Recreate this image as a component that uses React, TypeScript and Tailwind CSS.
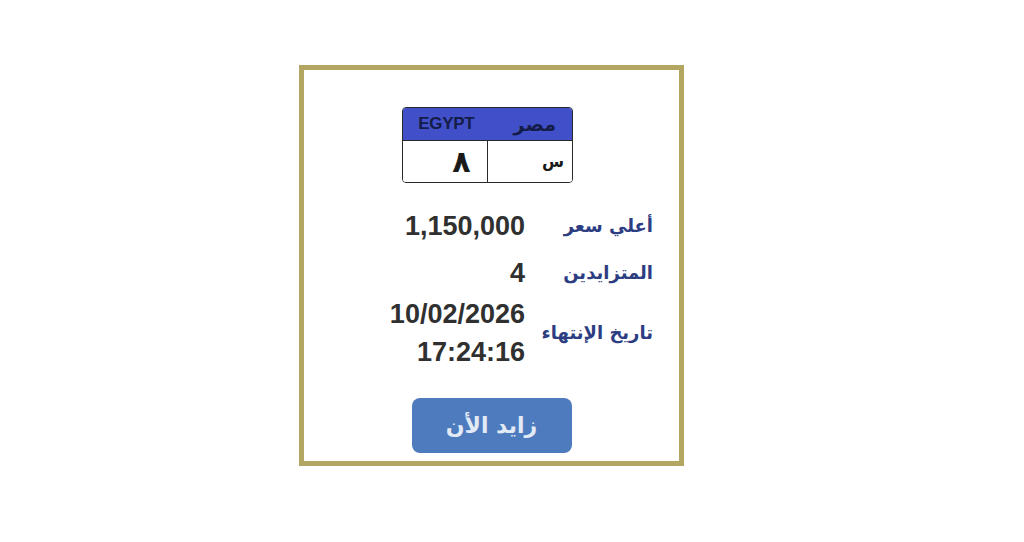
import React from "react";

const arabic = { fontFamily: '"DejaVu Sans", "Liberation Sans", sans-serif' };
const latin = { fontFamily: '"Liberation Sans", Arial, sans-serif' };

function Row({ label, values, className }: { label: string; values: string[]; className?: string }) {
  return (
    <div dir="rtl" className={"flex items-center " + (className ?? "")}>
      <div
        className="w-[128px] shrink-0 text-right text-[18px] font-bold text-[#2d3d82] leading-[38px]"
        style={arabic}
      >
        {label}
      </div>
      <div className="flex flex-col items-start">
        {values.map((v) => (
          <div
            key={v}
            dir="ltr"
            className="h-[38px] text-[27px] font-bold leading-[38px] text-[#303030]"
            style={latin}
          >
            {v}
          </div>
        ))}
      </div>
    </div>
  );
}

export default function App() {
  return (
    <div className="w-[1024px] h-[542px] bg-white overflow-hidden">
      <div className="ml-[299px] mt-[65px] w-[385px] h-[401px] border-[5px] border-[#b3a663] bg-white flex flex-col">
        {/* plate */}
        <div className="flex justify-center pt-[37px]">
          <div className="mr-[8px] w-[171px] h-[76px] rounded-[4px] border-[1.5px] border-[#2a2a2a] overflow-hidden flex flex-col">
            <div className="h-[33px] bg-[#4150c8] flex border-b-[1.5px] border-[#2a2a2a]">
              <div className="w-1/2 flex items-center justify-center pl-[2px]">
                <span className="text-[17px] font-bold text-[#141c48] tracking-[-0.3px]" style={latin}>
                  EGYPT
                </span>
              </div>
              <div className="w-1/2 flex items-center justify-center pl-[10px]">
                <span className="text-[19px] font-bold text-[#141c48]" style={arabic}>
                  مصر
                </span>
              </div>
            </div>
            <div className="flex-1 flex bg-white">
              <div className="w-1/2 border-r-[1.5px] border-[#2a2a2a] flex items-center justify-end pr-[16px]">
                <span className="text-[30px] font-bold text-[#1a1a1a] leading-none" style={arabic}>
                  ٨
                </span>
              </div>
              <div className="w-1/2 flex items-center justify-end pr-[8px]">
                <span className="text-[16px] font-bold text-[#1a1a1a] leading-none" style={arabic}>
                  س
                </span>
              </div>
            </div>
          </div>
        </div>

        {/* details */}
        <div className="flex flex-col pr-[26px] mt-[24px]">
          <Row label="أعلي سعر" values={["1,150,000"]} />
          <Row label="المتزايدين" values={["4"]} className="mt-[9px]" />
          <Row label="تاريخ الإنتهاء" values={["10/02/2026", "17:24:16"]} className="mt-[3px]" />
        </div>

        {/* button */}
        <div className="flex justify-center mt-[27px]">
          <button
            className="w-[160px] h-[55px] rounded-[8px] bg-[#4e7bbd] text-[#e2eaf6] text-[22px] font-bold"
            style={arabic}
            dir="rtl"
          >
            زايد الأن
          </button>
        </div>
      </div>
    </div>
  );
}
